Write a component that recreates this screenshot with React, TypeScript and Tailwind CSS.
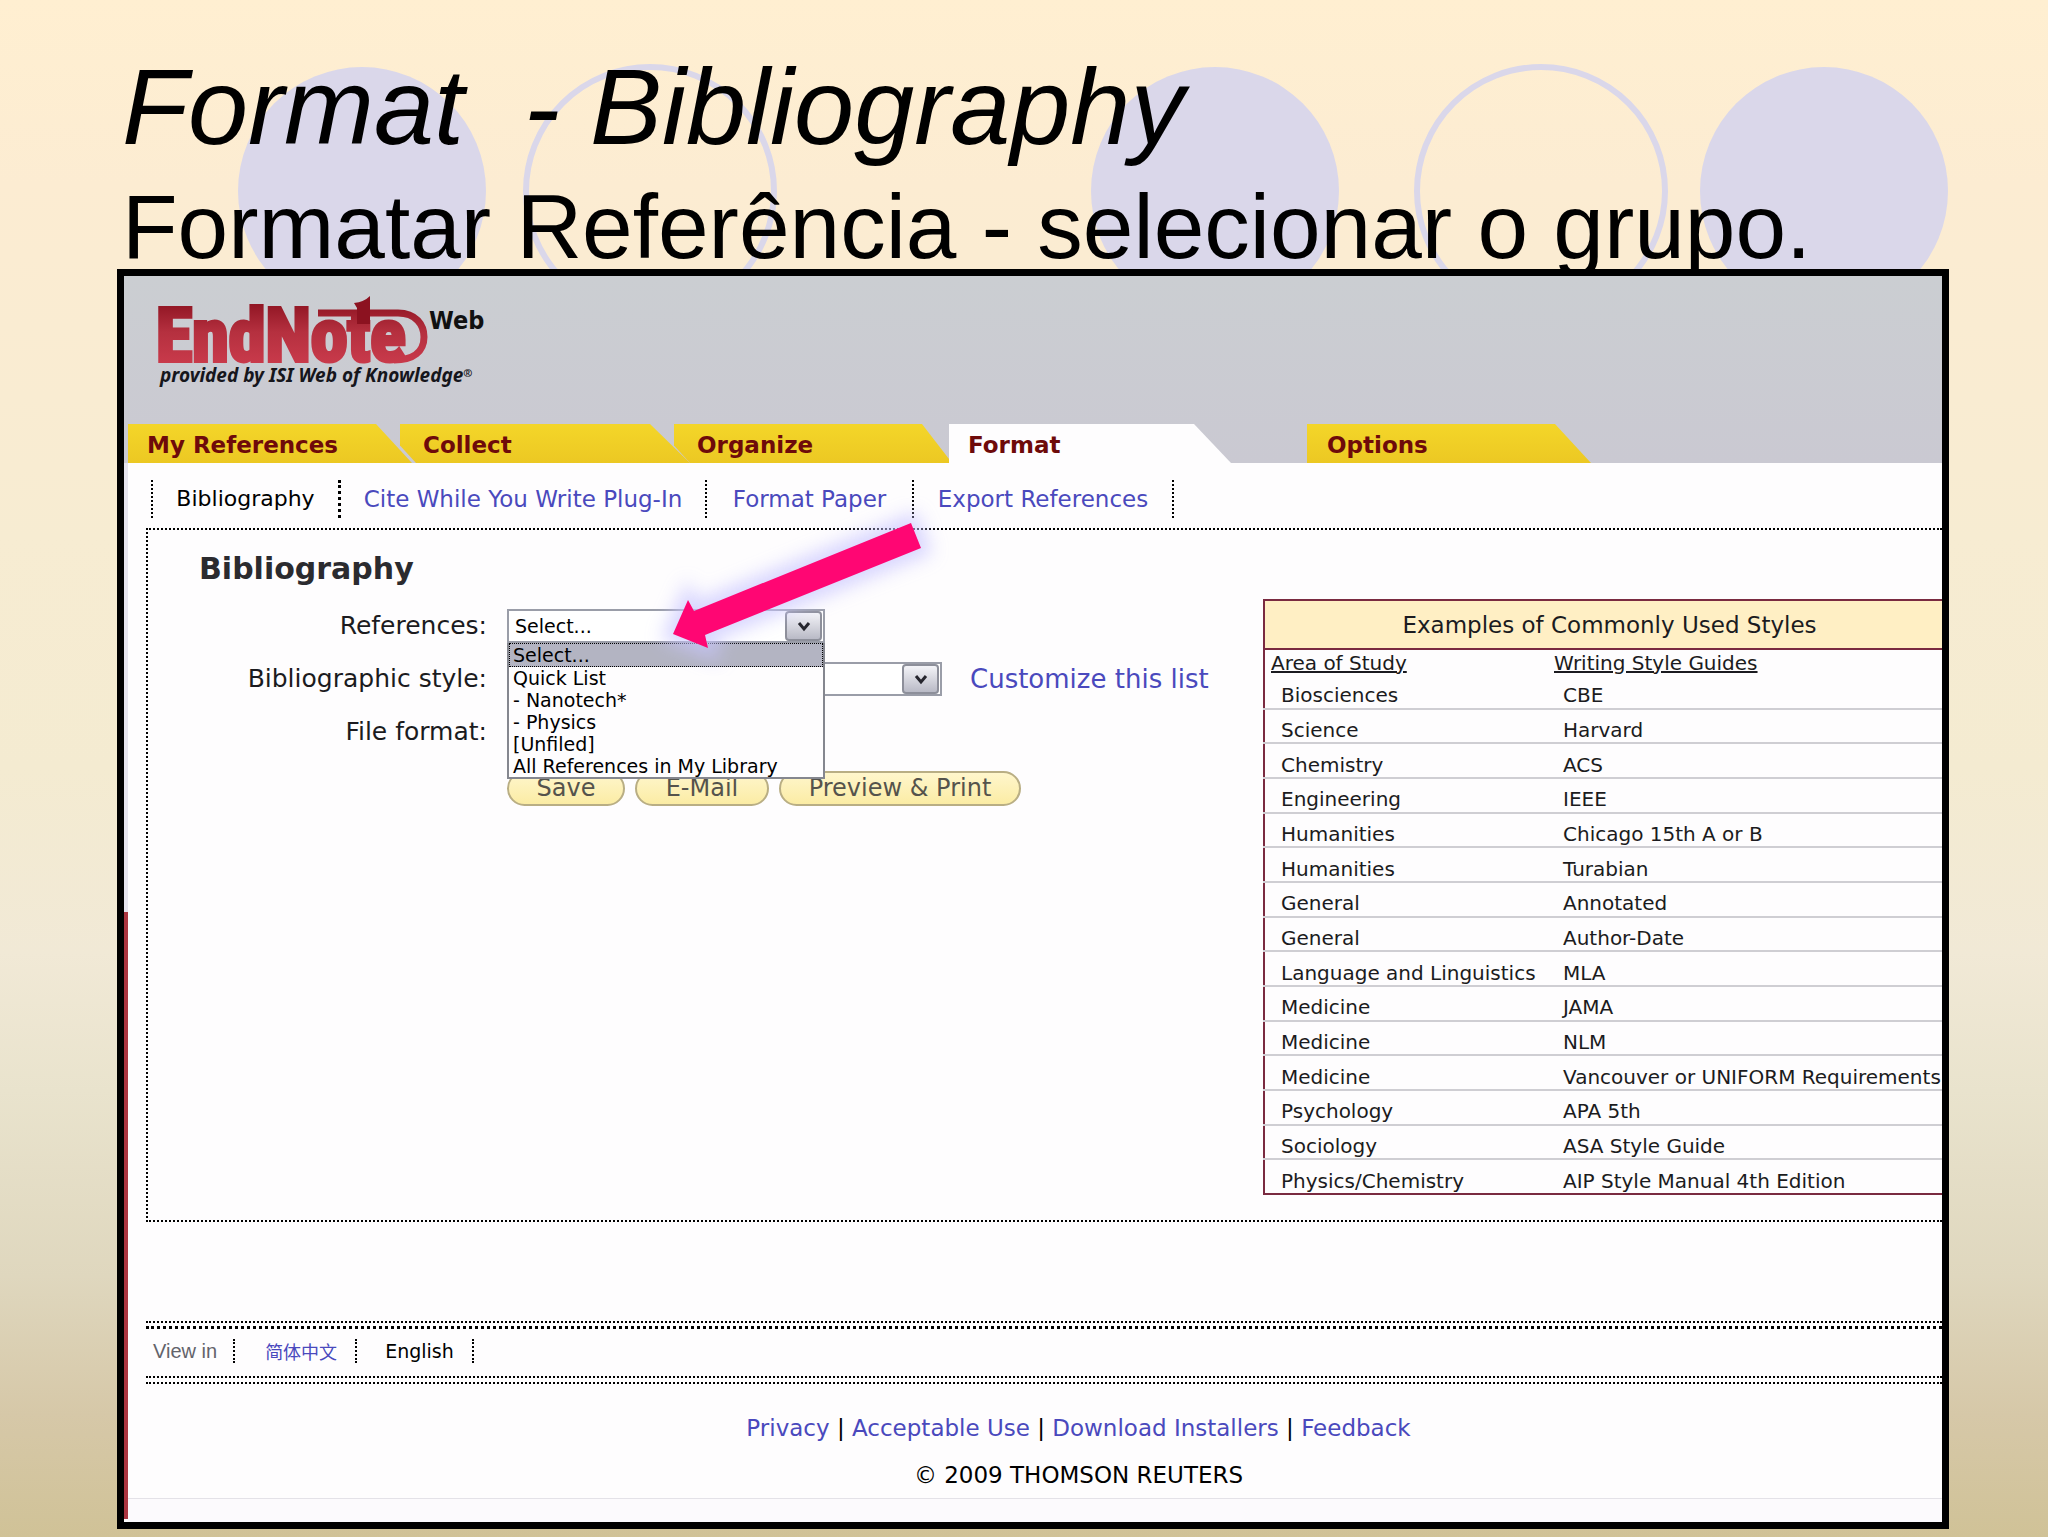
import React from 'react';

const TABS = [
  { label: 'My References', style: 'w-[284px] pl-[19px] [clip-path:polygon(0_0,248px_0,100%_100%,0_100%)]' },
  { label: 'Collect', style: '-ml-3 w-[290px] pl-[23px] [clip-path:polygon(0_0,250px_0,100%_100%,16px_100%,0_55%)]' },
  { label: 'Organize', style: '-ml-4 w-[275px] pl-[23px] [clip-path:polygon(0_0,248px_0,100%_90%,100%_100%,16px_100%,0_55%)]' },
  { label: 'Format', active: true, style: 'w-[282px] pl-[19px] [clip-path:polygon(0_0,245px_0,100%_100%,0_100%)]' },
  { label: 'Options', style: 'ml-[76px] w-[284px] pl-5 [clip-path:polygon(0_0,248px_0,100%_100%,0_100%)]' },
];

const SUB_TABS = [
  { label: 'Cite While You Write Plug-In', width: 'w-[366px]' },
  { label: 'Format Paper', width: 'w-[207px]' },
  { label: 'Export References', width: 'w-[260px]' },
];

const GROUPS = ['Select...', 'Quick List', '- Nanotech*', '- Physics', '[Unfiled]', 'All References in My Library'];

const STYLES = [
  ['Biosciences', 'CBE'],
  ['Science', 'Harvard'],
  ['Chemistry', 'ACS'],
  ['Engineering', 'IEEE'],
  ['Humanities', 'Chicago 15th A or B'],
  ['Humanities', 'Turabian'],
  ['General', 'Annotated'],
  ['General', 'Author-Date'],
  ['Language and Linguistics', 'MLA'],
  ['Medicine', 'JAMA'],
  ['Medicine', 'NLM'],
  ['Medicine', 'Vancouver or UNIFORM Requirements'],
  ['Psychology', 'APA 5th'],
  ['Sociology', 'ASA Style Guide'],
  ['Physics/Chemistry', 'AIP Style Manual 4th Edition'],
];

const ACTIONS = [
  { label: 'Save', width: 'w-[118px]' },
  { label: 'E-Mail', width: 'w-[134px]' },
  { label: 'Preview & Print', width: 'w-[242px]' },
];

const FOOTER_LINKS = ['Privacy', 'Acceptable Use', 'Download Installers', 'Feedback'];

const Circles: React.FC = () => (
  <svg className="absolute left-0 top-0 -z-10" width="2048" height="330" aria-hidden="true">
    <g fill="#dad7ea">
      <circle cx="362" cy="191" r="124" />
      <circle cx="1215" cy="191" r="124" />
      <circle cx="1824" cy="191" r="124" />
    </g>
    <g fill="none" stroke="#dad7ea" strokeWidth="6">
      <circle cx="650" cy="191" r="124" />
      <circle cx="1541" cy="191" r="124" />
    </g>
  </svg>
);

const Logo: React.FC = () => (
  <svg width="340" height="100" viewBox="150 290 340 100" role="img" aria-label="EndNote Web">
    <defs>
      <linearGradient id="logoRed" gradientUnits="userSpaceOnUse" x1="0" y1="300" x2="0" y2="364">
        <stop offset="0" stopColor="#8c1220" />
        <stop offset="0.5" stopColor="#b5303f" />
        <stop offset="1" stopColor="#c93a4b" />
      </linearGradient>
    </defs>
    <text x="156" y="361" fontSize="74" fontWeight="700" fill="url(#logoRed)" stroke="url(#logoRed)" strokeWidth="4" fontFamily="'Roboto Condensed', 'Roboto', sans-serif">
      EndNote
    </text>
    <path d="M318 313H398C416 313 424 325 424 337C424 351 414 360 394 360" fill="none" stroke="url(#logoRed)" strokeWidth="7" />
    <path d="M354 303Q364 302 370 296V324H357V308Z" fill="#8c1220" />
    <text x="429" y="329" fontSize="25" fontWeight="700" fill="#111" fontFamily="'DejaVu Sans Condensed', sans-serif">Web</text>
    <text x="160" y="382" fontSize="19" fontWeight="700" fontStyle="italic" fill="#16161c" fontFamily="'Noto Sans', 'Open Sans', sans-serif">
      provided by ISI Web of Knowledge<tspan fontSize="11" dy="-5">®</tspan>
    </text>
  </svg>
);

const DropButton: React.FC = () => (
  <span className="pointer-events-none absolute inset-y-0.5 right-[3px] flex w-[37px] items-center justify-center rounded-sm border-2 border-[#8d8f9a] bg-linear-to-b from-[#f4f4f8] to-[#b9bac6]">
    <svg width="14" height="11" viewBox="0 0 14 11">
      <path d="M2 2L7 8L12 2" fill="none" stroke="#26262e" strokeWidth="3" />
    </svg>
  </span>
);

const Arrow: React.FC = () => (
  <svg className="pointer-events-none absolute left-[500px] top-[220px] z-20" width="330" height="180" viewBox="624 496 330 180" aria-hidden="true">
    <defs>
      <filter id="glow" x="-20%" y="-30%" width="140%" height="160%">
        <feGaussianBlur stdDeviation="9" />
      </filter>
    </defs>
    <path d="M673 634L688 600L694 611L911 523L921 548L705 635L708 648Z" fill="#c9c6ff" stroke="#c9c6ff" strokeWidth="18" opacity="0.7" filter="url(#glow)" />
    <path d="M673 634L688 600L694 611L911 523L921 548L705 635L708 648Z" fill="#ff0673" />
  </svg>
);

const App: React.FC = () => {
  return (
    <div className="relative isolate min-h-screen overflow-hidden bg-[linear-gradient(#ffefd1,#fcecd2_12%,#f7ecd2_35%,#f4ebd1_50%,#f1e9d6_62%,#e9e3cd_71%,#dfd7be_83%,#d6c8a8_92%,#d0c297)] pb-2 pl-[117px] pr-[99px] pt-11 text-black">
      <Circles />
      <h1 className="pl-[5px] font-['Liberation_Sans',Arial,sans-serif]">
        <span className="block whitespace-pre text-[108px] leading-[125px] italic">Format  - Bibliography</span>
        <span className="block h-[100px] text-[91px] leading-[115px] whitespace-nowrap">Formatar Referência - selecionar o grupo.</span>
      </h1>

      <main className="relative overflow-hidden border-7 border-black bg-[#fefdfe] font-['DejaVu_Sans',Verdana,sans-serif]">
        <div className="absolute top-[187px] left-0 h-[456px] w-1 bg-[#e6e4ee]" />
        <div className="absolute bottom-[3px] left-0 h-[607px] w-1 bg-[#ab3540]" />
        <header className="bg-linear-to-b from-[#cbced2] to-[#cac9d2]">
          <div className="h-[148px] pl-[26px] pt-[14px]">
            <Logo />
          </div>
          <nav className="flex pl-1">
            {TABS.map(tab => (
              <a
                key={tab.label}
                href="#"
                className={`h-[39px] shrink-0 text-[23px] leading-[43px] font-bold text-[#6e0a0a] ${tab.active ? 'bg-[#fefdfe]' : 'bg-linear-to-b from-[#f4d629] to-[#ecc823]'} ${tab.style}`}
              >
                {tab.label}
              </a>
            ))}
          </nav>
        </header>

        <nav className="flex h-[65px] items-center pl-[27px] pt-1.5 text-center text-[23px] leading-[38px] whitespace-nowrap">
          <span className="w-[190px] border-l-2 border-r-3 border-dotted border-black text-[22px]">Bibliography</span>
          {SUB_TABS.map(({ label, width }) => (
            <a key={label} href="#" className={`border-r-2 border-dotted border-black text-[#4a49bd] ${width}`}>
              {label}
            </a>
          ))}
        </nav>

        <section className="ml-[22px] flex h-[694px] justify-between border-y-2 border-l-2 border-dotted border-black">
          <form className="relative ml-[51px] pt-[19px]">
            <h2 className="text-[30px] leading-10 font-bold text-[#2b2b2f]">Bibliography</h2>
            <div className="mt-5 grid grid-cols-[288px_auto] items-center gap-x-5 gap-y-[19px] text-[25px] leading-[34px] text-[#1b1b20]">
              <label htmlFor="refs" className="text-right">References:</label>
              <div className="relative w-[318px]">
                <select id="refs" className="block h-[34px] w-full appearance-none border-2 border-[#9a9da8] bg-white pl-1.5 text-[19px] leading-[30px] text-black">
                  {GROUPS.map(g => <option key={g}>{g}</option>)}
                </select>
                <DropButton />
                <ul className="absolute left-0 top-full z-10 w-full border-2 border-t-0 border-[#85878f] bg-[#fefdfe] text-[19px] leading-[22px] whitespace-nowrap text-black">
                  {GROUPS.map((g, i) => (
                    <li key={g} className={i === 0 ? 'border border-dotted border-black bg-[#b3b4c2] pl-[3px]' : 'pl-1'}>{g}</li>
                  ))}
                </ul>
              </div>
              <label htmlFor="bibstyle" className="text-right">Bibliographic style:</label>
              <div className="flex items-center gap-7">
                <div className="relative w-[435px]">
                  <select id="bibstyle" className="block h-[34px] w-full appearance-none border-2 border-[#9a9da8] bg-white" />
                  <DropButton />
                </div>
                <a href="#" className="text-[26px] whitespace-nowrap text-[#4a49bd]">Customize this list</a>
              </div>
              <span className="text-right">File format:</span>
            </div>
            <div className="mt-[22px] ml-[308px] flex gap-2.5 text-[24px] leading-[31px] text-[#55534c]">
              {ACTIONS.map(({ label, width }) => (
                <button key={label} type="button" className={`rounded-full border-2 border-[#b9ae84] bg-linear-to-b from-[#fff6cc] to-[#fbeca4] whitespace-nowrap ${width}`}>
                  {label}
                </button>
              ))}
            </div>
          </form>

          <table className="mt-[69px] -mr-[14px] h-[596px] w-[693px] shrink-0 border-collapse border-2 border-[#7a2a40] text-left text-[20px] leading-6 text-[#1b1b20]">
            <thead>
              <tr className="h-[49px] border-b-2 border-[#7a2a40] bg-[#ffefc4]">
                <th colSpan={2} className="text-center text-[23px] font-normal">Examples of Commonly Used Styles</th>
              </tr>
              <tr className="h-[26px]">
                <th className="w-[290px] pl-1.5 font-normal underline">Area of Study</th>
                <th className="font-normal underline">Writing Style Guides</th>
              </tr>
            </thead>
            <tbody>
              {STYLES.map(([area, guide], i) => (
                <tr key={i} className="border-b-2 border-[#cfced3] last:border-[#7a2a40]">
                  <td className="pt-2 pl-4">{area}</td>
                  <td className="pt-2 pl-[9px] whitespace-nowrap">{guide}</td>
                </tr>
              ))}
            </tbody>
          </table>
        </section>

        <Arrow />

        <footer className="mt-[99px]">
          <div className="ml-[22px] border-t-2 border-dotted border-black pt-[3px]">
            <div className="flex h-[52px] items-center border-t-3 border-b-2 border-dotted border-black pb-1 pl-[7px] text-[19px] leading-6">
              <span className="border-r-2 border-dotted border-black pr-4 font-['Liberation_Sans',sans-serif] text-[20px] text-[#63636b]">View in</span>
              <a href="#" className="border-r-2 border-dotted border-black pl-[30px] pr-[18px] font-['Noto_Sans_CJK_SC',sans-serif] text-[18px] text-[#4a49bd]">简体中文</a>
              <span className="border-r-2 border-dotted border-black pr-[18px] pl-7">English</span>
            </div>
            <div className="mt-1 border-t-2 border-dotted border-black" />
          </div>
          <div className="pt-[27px] pl-[91px] text-center text-[23px] leading-[34px]">
            {FOOTER_LINKS.map((label, i) => (
              <React.Fragment key={label}>
                {i > 0 && ' | '}
                <a href="#" className="text-[#4a49bd]">{label}</a>
              </React.Fragment>
            ))}
            <p className="mt-[13px]">© 2009 THOMSON REUTERS</p>
          </div>
          <div className="mt-1.5 ml-1 h-6 border-t border-[#e4e2e8] bg-[#fcfafd]" />
        </footer>
      </main>
    </div>
  );
};

export default App;
